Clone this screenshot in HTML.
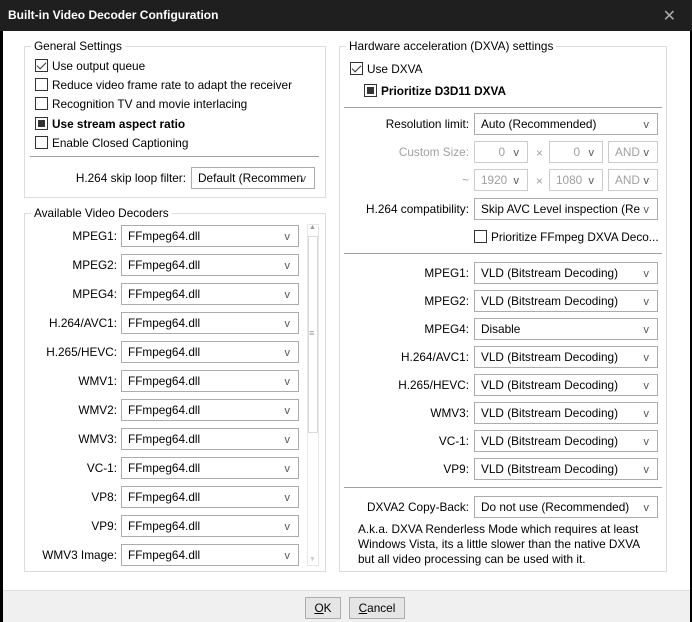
<!DOCTYPE html>
<html><head><meta charset="utf-8">
<style>
*{box-sizing:border-box;margin:0;padding:0}
body{width:692px;height:622px;background:#000;font-family:"Liberation Sans",sans-serif;font-size:11.8px;color:#000;position:relative;overflow:hidden}
.a{position:absolute}
#title{left:0;top:0;width:692px;height:31px;background:#1f1f1f;color:#fff;font-weight:bold;font-size:12px;padding:8px 0 0 8px}
#client{left:3px;top:31px;width:687px;height:591px;background:#fff}
#foot{left:3px;top:590px;width:687px;height:32px;background:#f0f0f0;border-top:1px solid #dfdfdf}
.grp{position:absolute;border:1px solid #dcdcdc}
.gl{position:absolute;background:#fff;padding:0 3px;top:-8px;left:6px;white-space:nowrap}
.cb{position:absolute;white-space:nowrap;line-height:14px}
.cb i{display:inline-block;width:13px;height:13px;border:1px solid #333;vertical-align:-2px;margin-right:4px;position:relative;background:#fff}
.cb i.f:after{content:"";position:absolute;left:2px;top:2px;width:7px;height:7px;background:#333}
.cb i.c:after{content:"";position:absolute;left:3px;top:0px;width:4px;height:8px;border:solid #333;border-width:0 1.5px 1.5px 0;transform:rotate(45deg)}
.combo{position:absolute;height:22px;border:1px solid #acacac;background:#fff;padding:3px 18px 0 6px;line-height:14px;white-space:nowrap;overflow:hidden}
.combo:after{content:"v";position:absolute;right:8px;top:4px;color:#555;font-size:11px}
.lab{position:absolute;text-align:right;white-space:nowrap;line-height:14px}
.sep{position:absolute;height:1px;background:#a0a0a0}
.gr{color:#a0a0a0}
.btn{position:absolute;height:22px;border:1px solid #adadad;background:#e5e5e5;text-align:center;padding-top:3px}
</style></head><body>
<div id="title" class="a">Built-in Video Decoder Configuration<span style="position:absolute;right:16px;top:6px;font-weight:normal;color:#aaa;font-size:16px">✕</span></div>
<div id="client" class="a"></div>
<div id="foot" class="a"></div>
<div class="btn" style="left:305px;top:597px;width:36px"><u>O</u>K</div>
<div class="btn" style="left:349px;top:597px;width:56px"><u>C</u>ancel</div>

<div class="grp" style="left:24px;top:46px;width:302px;height:152px"><span class="gl">General Settings</span></div>
<div class="cb" style="left:35px;top:59px"><i class="c"></i>Use output queue</div>
<div class="cb" style="left:35px;top:78px"><i></i>Reduce video frame rate to adapt the receiver</div>
<div class="cb" style="left:35px;top:97px"><i></i>Recognition TV and movie interlacing</div>
<div class="cb" style="left:35px;top:117px;font-weight:bold"><i class="f"></i>Use stream aspect ratio</div>
<div class="cb" style="left:35px;top:136px"><i></i>Enable Closed Captioning</div>
<div class="sep" style="left:30px;top:156px;width:289px"></div>
<div class="lab" style="right:506px;top:171px">H.264 skip loop filter:</div>
<div class="combo" style="left:191px;top:167px;width:124px">Default (Recommen</div>

<div class="grp" style="left:24px;top:213px;width:302px;height:359px"><span class="gl">Available Video Decoders</span></div>
<div class="a" style="left:307px;top:224px;width:12px;height:342px;border:1px solid #e6e6e6;background:#fff"></div>
<div class="a" style="left:308px;top:236px;width:10px;height:197px;border:1px solid #dadada;background:#fff"></div>
<div class="a" style="left:309px;top:328px;font-size:9px;color:#999">≡</div>
<div class="a" style="left:309px;top:224px;font-size:7px;color:#999">▲</div>
<div class="a" style="left:309px;top:556px;font-size:7px;color:#ccc">▼</div>
<div class="a" style="left:25px;top:224px;width:290px;height:342px;overflow:hidden">
<div class="lab" style="right:198px;top:5px">MPEG1:</div><div class="combo" style="left:96px;top:1px;width:178px">FFmpeg64.dll</div>
<div class="lab" style="right:198px;top:34px">MPEG2:</div><div class="combo" style="left:96px;top:30px;width:178px">FFmpeg64.dll</div>
<div class="lab" style="right:198px;top:63px">MPEG4:</div><div class="combo" style="left:96px;top:59px;width:178px">FFmpeg64.dll</div>
<div class="lab" style="right:198px;top:92px">H.264/AVC1:</div><div class="combo" style="left:96px;top:88px;width:178px">FFmpeg64.dll</div>
<div class="lab" style="right:198px;top:121px">H.265/HEVC:</div><div class="combo" style="left:96px;top:117px;width:178px">FFmpeg64.dll</div>
<div class="lab" style="right:198px;top:150px">WMV1:</div><div class="combo" style="left:96px;top:146px;width:178px">FFmpeg64.dll</div>
<div class="lab" style="right:198px;top:179px">WMV2:</div><div class="combo" style="left:96px;top:175px;width:178px">FFmpeg64.dll</div>
<div class="lab" style="right:198px;top:208px">WMV3:</div><div class="combo" style="left:96px;top:204px;width:178px">FFmpeg64.dll</div>
<div class="lab" style="right:198px;top:237px">VC-1:</div><div class="combo" style="left:96px;top:233px;width:178px">FFmpeg64.dll</div>
<div class="lab" style="right:198px;top:266px">VP8:</div><div class="combo" style="left:96px;top:262px;width:178px">FFmpeg64.dll</div>
<div class="lab" style="right:198px;top:295px">VP9:</div><div class="combo" style="left:96px;top:291px;width:178px">FFmpeg64.dll</div>
<div class="lab" style="right:198px;top:324px">WMV3 Image:</div><div class="combo" style="left:96px;top:320px;width:178px">FFmpeg64.dll</div>
</div>

<div class="grp" style="left:339px;top:46px;width:328px;height:526px"><span class="gl">Hardware acceleration (DXVA) settings</span></div>
<div class="cb" style="left:350px;top:62px"><i class="c"></i>Use DXVA</div>
<div class="cb" style="left:364px;top:84px;font-weight:bold"><i class="f"></i>Prioritize D3D11 DXVA</div>
<div class="sep" style="left:344px;top:107px;width:318px"></div>
<div class="lab" style="right:223px;top:117px">Resolution limit:</div>
<div class="combo" style="left:474px;top:113px;width:184px">Auto (Recommended)</div>
<div class="lab gr" style="right:223px;top:145px">Custom Size:</div>
<div class="combo gr" style="left:474px;top:141px;width:54px;text-align:right;padding-right:22px;border-color:#ccc">0</div>
<div class="a gr" style="left:536px;top:146px">×</div>
<div class="combo gr" style="left:549px;top:141px;width:54px;text-align:right;padding-right:22px;border-color:#ccc">0</div>
<div class="combo gr" style="left:608px;top:141px;width:50px;border-color:#ccc">AND</div>
<div class="lab gr" style="right:223px;top:173px">~</div>
<div class="combo gr" style="left:474px;top:169px;width:54px;text-align:right;padding-right:22px;border-color:#ccc">1920</div>
<div class="a gr" style="left:536px;top:174px">×</div>
<div class="combo gr" style="left:549px;top:169px;width:54px;text-align:right;padding-right:22px;border-color:#ccc">1080</div>
<div class="combo gr" style="left:608px;top:169px;width:50px;border-color:#ccc">AND</div>
<div class="lab" style="right:223px;top:202px">H.264 compatibility:</div>
<div class="combo" style="left:474px;top:198px;width:184px">Skip AVC Level inspection (Re</div>
<div class="cb" style="left:474px;top:230px"><i></i>Prioritize FFmpeg DXVA Deco...</div>
<div class="sep" style="left:344px;top:253px;width:318px"></div>
<div class="lab" style="right:223px;top:266px">MPEG1:</div><div class="combo" style="left:474px;top:262px;width:184px">VLD (Bitstream Decoding)</div>
<div class="lab" style="right:223px;top:294px">MPEG2:</div><div class="combo" style="left:474px;top:290px;width:184px">VLD (Bitstream Decoding)</div>
<div class="lab" style="right:223px;top:322px">MPEG4:</div><div class="combo" style="left:474px;top:318px;width:184px">Disable</div>
<div class="lab" style="right:223px;top:350px">H.264/AVC1:</div><div class="combo" style="left:474px;top:346px;width:184px">VLD (Bitstream Decoding)</div>
<div class="lab" style="right:223px;top:378px">H.265/HEVC:</div><div class="combo" style="left:474px;top:374px;width:184px">VLD (Bitstream Decoding)</div>
<div class="lab" style="right:223px;top:406px">WMV3:</div><div class="combo" style="left:474px;top:402px;width:184px">VLD (Bitstream Decoding)</div>
<div class="lab" style="right:223px;top:434px">VC-1:</div><div class="combo" style="left:474px;top:430px;width:184px">VLD (Bitstream Decoding)</div>
<div class="lab" style="right:223px;top:462px">VP9:</div><div class="combo" style="left:474px;top:458px;width:184px">VLD (Bitstream Decoding)</div>
<div class="sep" style="left:344px;top:487px;width:318px"></div>
<div class="lab" style="right:223px;top:500px">DXVA2 Copy-Back:</div>
<div class="combo" style="left:474px;top:496px;width:184px">Do not use (Recommended)</div>
<div class="a" style="left:358px;top:522px;width:300px;line-height:15px;height:44px;overflow:hidden">A.k.a. DXVA Renderless Mode which requires at least Windows Vista, its a little slower than the native DXVA but all video processing can be used with it.</div>
</body></html>
